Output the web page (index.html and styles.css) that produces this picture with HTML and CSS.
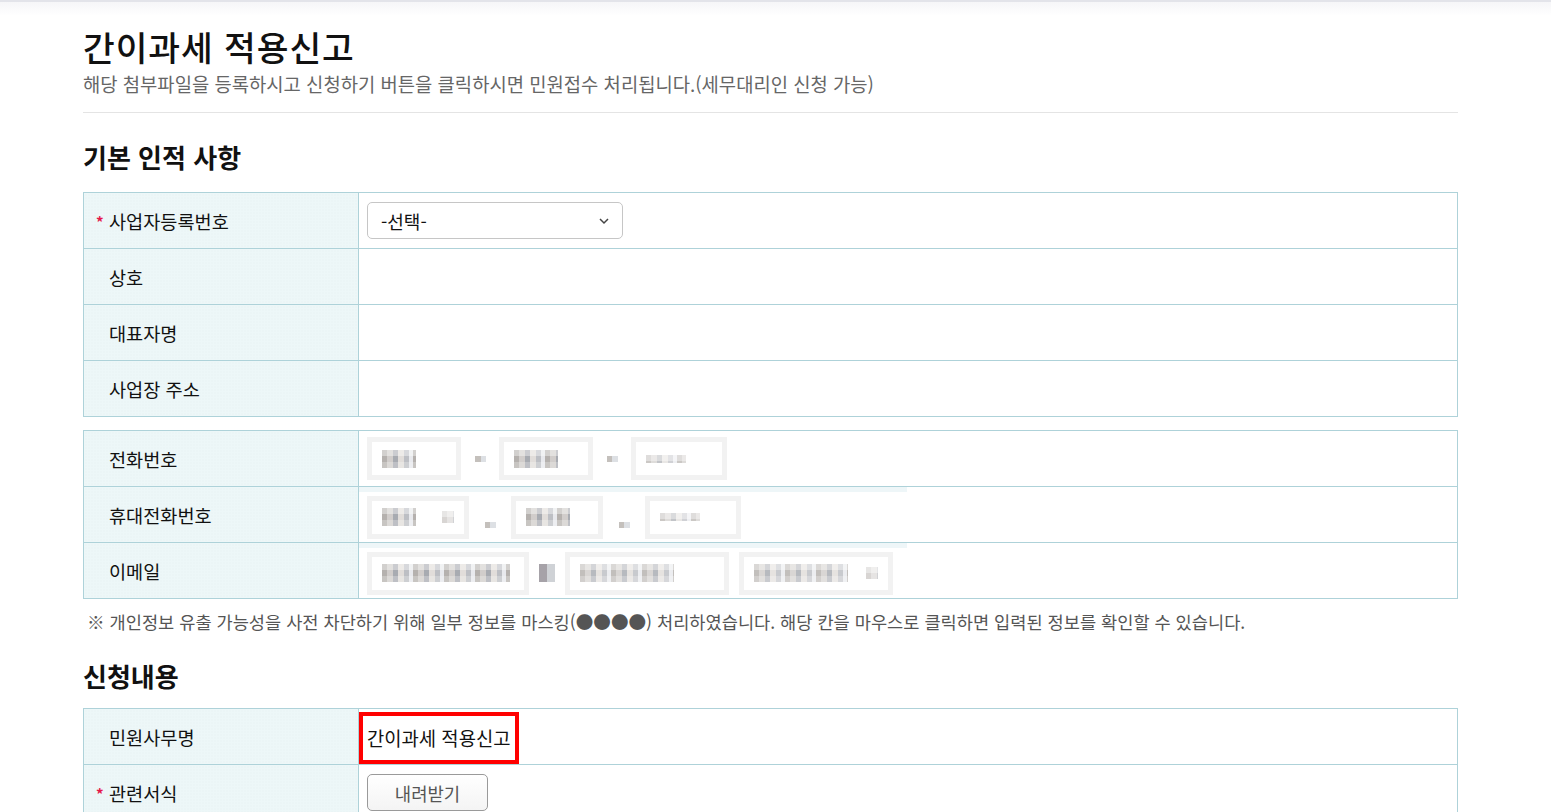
FILE: index.html
```html
<!DOCTYPE html>
<html lang="ko">
    <head>
        <meta charset="UTF-8">
        <title>간이과세 적용신고</title>
        <link rel="stylesheet" href="styles.css">
    </head>
    <body>
        <div class="topbar"></div>

        <div class="wrap">
            <!-- 페이지 제목 -->
            <div class="page-head">
                <h1>간이과세 적용신고</h1>
                <p class="desc">해당 첨부파일을 등록하시고 신청하기 버튼을 클릭하시면 민원접수 처리됩니다.(세무대리인 신청 가능)</p>
            </div>

            <!-- 기본 인적 사항 -->
            <h2 class="sec-tit">기본 인적 사항</h2>
            <table class="tbl">
                <tr>
                    <th><span class="req">*</span>사업자등록번호</th>
                    <td>
                        <div class="sel">
                            <span>-선택-</span>
                            <svg width="12" height="8" viewBox="0 0 12 8"><path d="M2 2l4 4 4-4" fill="none" stroke="#444" stroke-width="1.5"/></svg>
                        </div>
                    </td>
                </tr>
                <tr>
                    <th>상호</th>
                    <td></td>
                </tr>
                <tr>
                    <th>대표자명</th>
                    <td></td>
                </tr>
                <tr>
                    <th>사업장 주소</th>
                    <td></td>
                </tr>
            </table>

            <table class="tbl tbl2">
                <tr>
                    <th>전화번호</th>
                    <td>
                        <div class="masked">
                            <span class="mbox w94"><i class="px px1"></i></span>
                            <i class="dash"></i>
                            <span class="mbox w94"><i class="px px2"></i></span>
                            <i class="dash"></i>
                            <span class="mbox w96"><i class="px px3"></i></span>
                        </div>
                    </td>
                </tr>
                <tr>
                    <th>휴대전화번호</th>
                    <td>
                        <div class="masked strip">
                            <span class="mbox w102"><i class="px px1"></i><i class="px px4"></i></span>
                            <i class="dash low"></i>
                            <span class="mbox w92"><i class="px px2"></i></span>
                            <i class="dash low"></i>
                            <span class="mbox w96"><i class="px px3"></i></span>
                        </div>
                    </td>
                </tr>
                <tr>
                    <th>이메일</th>
                    <td>
                        <div class="masked strip">
                            <span class="mbox w162"><i class="px px5"></i></span>
                            <i class="at"></i>
                            <span class="mbox w164"><i class="px px6"></i></span>
                            <span class="mbox w154"><i class="px px6"></i><i class="px px4"></i></span>
                        </div>
                    </td>
                </tr>
            </table>
            <p class="notice">※ 개인정보 유출 가능성을 사전 차단하기 위해 일부 정보를 마스킹(●●●●) 처리하였습니다. 해당 칸을 마우스로 클릭하면 입력된 정보를 확인할 수 있습니다.</p>

            <!-- 신청내용 -->
            <h2 class="sec-tit sec-tit2">신청내용</h2>
            <table class="tbl">
                <tr>
                    <th>민원사무명</th>
                    <td class="td-mark"><span class="mark">간이과세 적용신고</span></td>
                </tr>
                <tr>
                    <th><span class="req">*</span>관련서식</th>
                    <td><button type="button" class="btn">내려받기</button></td>
                </tr>
            </table>
        </div>
    </body>
</html>
```

FILE: styles.css
```css
*{
    box-sizing: border-box;
}
body{
    margin: 0;
    font-family: "Noto Sans CJK KR", "Noto Sans", sans-serif;
    color: #111;
    background: #fff;
}
/* 상단 경계선 */
.topbar{
    height: 16px;
    border-top: 2px solid #e3e4ea;
    background: linear-gradient(#f6f6f8, #fff);
}
.wrap{
    width: 1375px;
    margin-left: 83px;
}
/* 제목영역 */
.page-head{
    padding-top: 8px;
    padding-bottom: 15px;
    border-bottom: 1px solid #e4e4e4;
}
h1{
    margin: 0;
    font-size: 34.5px;
    font-weight: 500;
    line-height: 44px;
    letter-spacing: 0.9px;
}
.desc{
    margin: 3px 0 0;
    font-size: 18.8px;
    line-height: 26px;
    color: #666;
}
/* 섹션 제목 */
.sec-tit{
    margin: 27px 0 18px;
    font-size: 26px;
    font-weight: 700;
    line-height: 34px;
}
.sec-tit2{
    margin-top: 24px;
    margin-bottom: 15px;
}
/* 표 */
.tbl{
    width: 100%;
    border-collapse: collapse;
    border: 1px solid #aed2d9;
}
.tbl th,
.tbl td{
    height: 56px;
    border: 1px solid #aed2d9;
    font-size: 18.6px;
    font-weight: 400;
}
.tbl th{
    position: relative;
    width: 275px;
    padding-left: 25px;
    text-align: left;
    background-color: #edf7f8;
    background-image: radial-gradient(#e3eff1 0.6px, transparent 0.8px);
    background-size: 3px 3px;
}
.tbl td{
    padding: 0 8px;
}
.tbl2{
    margin-top: 13px;
}
.tbl2 td{
    padding: 0;
}
/* 필수표시 */
.req{
    position: absolute;
    left: 12px;
    top: 18px;
    color: #e5184a;
    font-size: 15px;
    font-weight: 700;
}
/* 셀렉트 */
.sel{
    display: flex;
    align-items: center;
    justify-content: space-between;
    width: 256px;
    height: 37px;
    padding: 0 12px 0 13px;
    border: 1px solid #c6c6c6;
    border-radius: 5px;
    font-size: 18px;
}
/* 마스킹 영역 */
.masked{
    display: flex;
    align-items: center;
    width: 548px;
    height: 55px;
    padding-left: 8px;
}
.strip{
    border-top: 5px solid #eef6f8;
}
.mbox{
    display: flex;
    align-items: center;
    justify-content: space-between;
    height: 43px;
    padding: 0 10px;
    border: 5px solid #f2f2f2;
    background: #fff;
}
.w94{ width: 94px; }
.w96{ width: 96px; }
.w92{ width: 92px; }
.w102{ width: 102px; }
.w154{ width: 154px; }
.w162{ width: 162px; }
.w164{ width: 164px; }
.masked .mbox + .mbox{
    margin-left: 10px;
}
.px{
    display: block;
    height: 18px;
    opacity: 0.85;
    background-image:
        linear-gradient(rgba(255,255,255,0.4) 0 6px, transparent 6px 12px, rgba(255,255,255,0.25) 12px),
        repeating-linear-gradient(90deg, #a9a4a0 0 5px, #c9c5c2 5px 11px, #9a9da4 11px 16px, #dcd8d4 16px 22px, #b2b4ba 22px 27px, #e4e6ea 27px 31px);
}
.px1{ width: 34px; }
.px2{ width: 44px; }
.px3{ width: 40px; opacity: 0.6; height: 8px; }
.px4{ width: 12px; opacity: 0.45; height: 12px; }
.px5{ width: 128px; }
.px6{ width: 94px; opacity: 0.7; }
.dash{
    display: block;
    width: 11px;
    height: 6px;
    margin: 0 13px 0 14px;
    background: linear-gradient(90deg, #c4c0bc 50%, #dde0e4 50%);
}
.dash.low{
    margin-top: 16px;
    margin-left: 16px;
    margin-right: 15px;
}
.at{
    display: block;
    width: 16px;
    height: 18px;
    margin: 0 10px;
    background: linear-gradient(90deg, #a6a2a8 50%, #cfd2d6 50%);
}
/* 안내문 */
.notice{
    margin: 10px 0 0 4px;
    font-size: 17.6px;
    line-height: 26px;
    color: #555;
}
/* 강조 박스 */
.td-mark{
    vertical-align: bottom;
}
.tbl td.td-mark{
    padding: 0;
}
.mark{
    display: inline-block;
    height: 52px;
    padding: 0 4px 0 4px;
    border: 4px solid #f00;
    line-height: 44px;
    font-size: 18.8px;
}
/* 버튼 */
.btn{
    width: 121px;
    height: 37px;
    border: 1px solid #9a9a9a;
    border-radius: 5px;
    background: linear-gradient(#fff, #f4f4f4);
    font-family: inherit;
    font-size: 17.8px;
    color: #555;
}
```
